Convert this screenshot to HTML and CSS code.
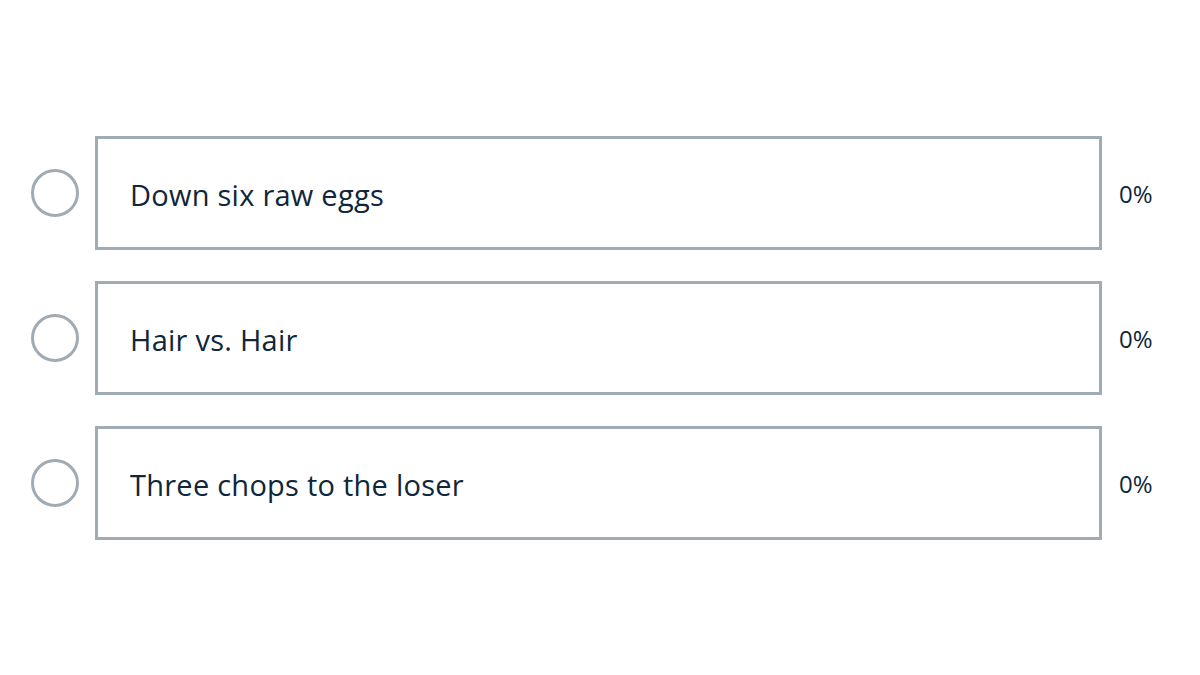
FILE: index.html
```html
<!DOCTYPE html>
<html lang="en">
<head>
<meta charset="utf-8">
<title>Poll</title>
<link rel="stylesheet" href="styles.css">
</head>
<body>
<main class="poll">
  <div class="option">
    <span class="radio"></span>
    <div class="box"><span class="label">Down six raw eggs</span></div>
    <span class="pct">0%</span>
  </div>
  <div class="option">
    <span class="radio"></span>
    <div class="box"><span class="label">Hair vs. Hair</span></div>
    <span class="pct">0%</span>
  </div>
  <div class="option">
    <span class="radio"></span>
    <div class="box"><span class="label">Three chops to the loser</span></div>
    <span class="pct">0%</span>
  </div>
</main>
</body>
</html>
```

FILE: styles.css
```css
html, body {
  margin: 0;
  padding: 0;
  background: #ffffff;
}
body {
  font-family: "Open Sans", "Liberation Sans", sans-serif;
  color: #10263a;
}
.poll {
  display: flex;
  flex-direction: column;
  gap: 31px;
  padding: 136px 0 0 31px;
}
.option {
  display: flex;
  align-items: center;
  height: 114px;
}
.radio {
  box-sizing: border-box;
  width: 48px;
  height: 48px;
  border: 3px solid #a1abb4;
  border-radius: 50%;
  flex: none;
}
.box {
  box-sizing: border-box;
  margin-left: 16px;
  width: 1007px;
  height: 114px;
  border: 3px solid #a1abb4;
  display: flex;
  align-items: center;
  padding-left: 32px;
}
.label {
  font-size: 29px;
  letter-spacing: 0.25px;
  position: relative;
  top: 1px;
}
.pct {
  margin-left: 17px;
  font-size: 24px;
}
```
